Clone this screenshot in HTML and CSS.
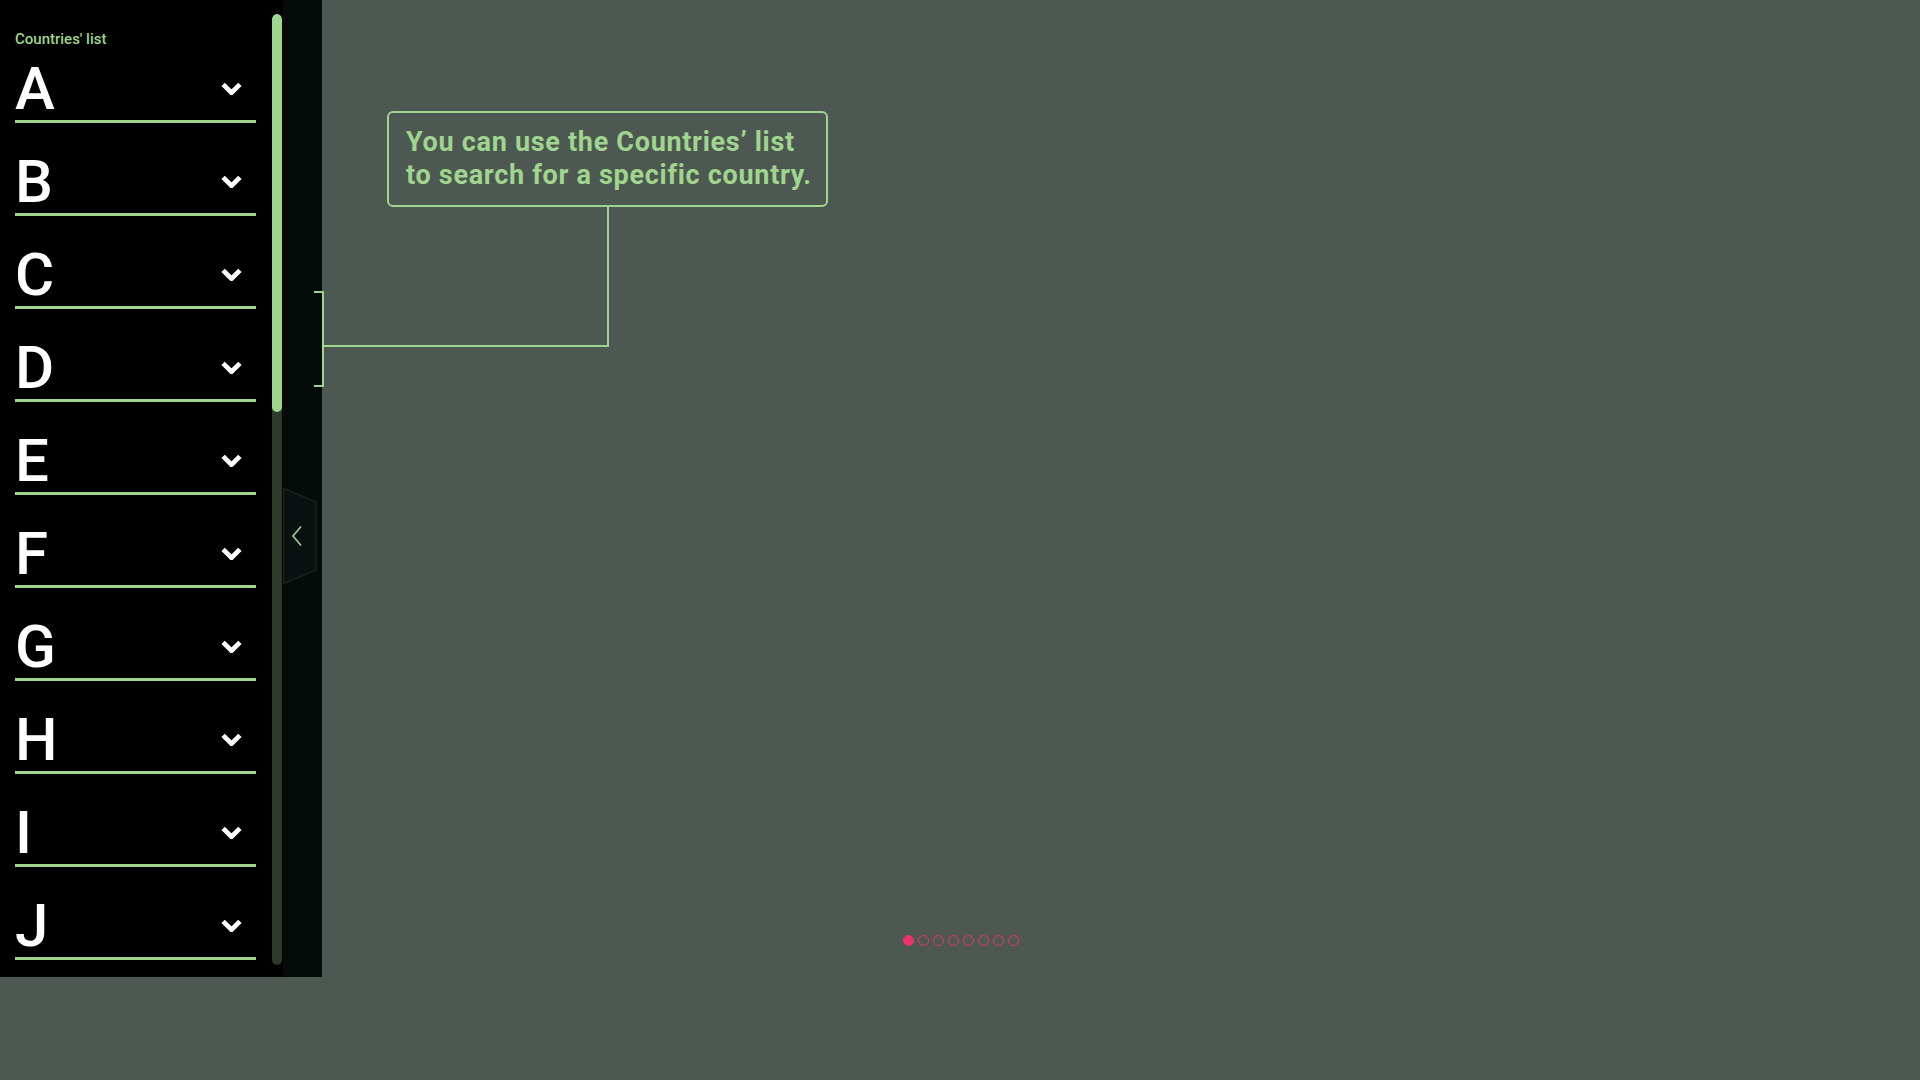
FILE: index.html
```html
<!DOCTYPE html>
<html lang="en">
<head>
<meta charset="utf-8">
<title>Countries' list</title>
<link rel="stylesheet" href="styles.css">
</head>
<body>
<div class="app">
  <aside class="sidebar">
    <div class="panel">
      <div class="list">
        <div class="list-label">Countries' list</div>
        <div class="row"><span class="letter">A</span><svg class="chev" viewBox="0 0 20 12"><polyline points="2,2 10,10 18,2"/></svg></div>
        <div class="row"><span class="letter">B</span><svg class="chev" viewBox="0 0 20 12"><polyline points="2,2 10,10 18,2"/></svg></div>
        <div class="row"><span class="letter">C</span><svg class="chev" viewBox="0 0 20 12"><polyline points="2,2 10,10 18,2"/></svg></div>
        <div class="row"><span class="letter">D</span><svg class="chev" viewBox="0 0 20 12"><polyline points="2,2 10,10 18,2"/></svg></div>
        <div class="row"><span class="letter">E</span><svg class="chev" viewBox="0 0 20 12"><polyline points="2,2 10,10 18,2"/></svg></div>
        <div class="row"><span class="letter">F</span><svg class="chev" viewBox="0 0 20 12"><polyline points="2,2 10,10 18,2"/></svg></div>
        <div class="row"><span class="letter">G</span><svg class="chev" viewBox="0 0 20 12"><polyline points="2,2 10,10 18,2"/></svg></div>
        <div class="row"><span class="letter">H</span><svg class="chev" viewBox="0 0 20 12"><polyline points="2,2 10,10 18,2"/></svg></div>
        <div class="row"><span class="letter">I</span><svg class="chev" viewBox="0 0 20 12"><polyline points="2,2 10,10 18,2"/></svg></div>
        <div class="row"><span class="letter">J</span><svg class="chev" viewBox="0 0 20 12"><polyline points="2,2 10,10 18,2"/></svg></div>
      </div>
      <div class="scrollbar"><div class="thumb"></div></div>
    </div>
    <div class="strip">
      <button class="toggle" aria-label="Collapse list">
        <svg class="toggle-shape" viewBox="0 0 34 96"><polygon points="0.5,0.5 33,14 33,82 0.5,95.5"/></svg>
        <svg class="toggle-chev" viewBox="0 0 12 22"><polyline points="10,1.5 2,11 10,20.5"/></svg>
      </button>
    </div>
  </aside>

  <main class="stage">
    <div class="callout">You can use the Countries’ list<br>to search for a specific country.</div>
    <div class="dots">
      <span class="dot active"></span><span class="dot"></span><span class="dot"></span><span class="dot"></span><span class="dot"></span><span class="dot"></span><span class="dot"></span><span class="dot"></span>
    </div>
  </main>
</div>
<svg class="bracket" width="320" height="98" viewBox="0 0 320 98">
  <polyline points="0,1 9,1 9,95 0,95"/>
  <polyline points="9,55 294,55 294,-84"/>
</svg>
</body>
</html>
```

FILE: styles.css
```css
* { box-sizing: border-box; }

html, body {
  margin: 0;
  padding: 0;
  width: 1920px;
  height: 1080px;
  overflow: hidden;
  background: #4e5852;
  font-family: "Liberation Sans", Arial, sans-serif;
}

.app {
  position: relative;
  display: flex;
  align-items: flex-start;
  width: 1920px;
  height: 1080px;
}

.sidebar {
  display: flex;
  width: 322px;
  height: 977px;
  flex: none;
}

.panel {
  display: flex;
  width: 283px;
  height: 100%;
  background: #000;
}

.list {
  width: 256px;
  padding-left: 15px;
  height: 100%;
  overflow: hidden;
}

.list-label {
  padding-top: 30px;
  font-family: Roboto, "Liberation Sans", sans-serif;
  font-weight: 500;
  font-size: 15px;
  line-height: 18px;
  color: #9fd58c;
}

.row {
  display: flex;
  align-items: center;
  justify-content: space-between;
  padding: 29px 14px 1px 0;
  border-bottom: 3px solid #9fd58c;
}

.list-label + .row {
  padding-top: 11px;
}

.letter {
  font-family: Roboto, "Liberation Sans", sans-serif;
  font-weight: 500;
  font-size: 60px;
  line-height: 60px;
  color: #fff;
}

.chev {
  width: 21px;
  height: 13px;
  margin-bottom: 2px;
  fill: none;
  stroke: #fff;
  stroke-width: 4.5;
  stroke-linejoin: miter;
}

.scrollbar {
  width: 10px;
  margin: 14px 0 12px 16px;
  border-radius: 5px;
  background: #2b3a2b;
  overflow: hidden;
}

.thumb {
  height: 398px;
  border-radius: 5px;
  background: #9fd58c;
}

.strip {
  width: 39px;
  height: 100%;
  background: #050b08;
}

.toggle {
  position: relative;
  display: block;
  margin-top: 488px;
  width: 34px;
  height: 96px;
  padding: 0;
  border: 0;
  background: transparent;
  cursor: pointer;
}

.toggle-shape {
  position: absolute;
  left: 0;
  top: 0;
  width: 34px;
  height: 96px;
  fill: #0b1110;
  stroke: #1e2623;
  stroke-width: 1.2;
}

.toggle-chev {
  position: absolute;
  left: 8px;
  top: 37px;
  width: 12px;
  height: 22px;
  fill: none;
  stroke: #9fd58c;
  stroke-width: 1.6;
}

.stage {
  position: relative;
  flex: 1;
  height: 100%;
}

.callout {
  position: absolute;
  left: 65px;
  top: 111px;
  width: 441px;
  height: 96px;
  padding: 13px 0 0 17px;
  border: 2px solid #9fd58c;
  border-radius: 6px;
  font-family: Roboto, "Liberation Sans", sans-serif;
  font-weight: 700;
  font-size: 27px;
  line-height: 33px;
  letter-spacing: 0.7px;
  white-space: nowrap;
  color: #9fd58c;
}

.bracket {
  position: absolute;
  left: 314px;
  top: 291px;
  overflow: visible;
  fill: none;
  stroke: #9fd58c;
  stroke-width: 2;
}

.dots {
  position: absolute;
  left: 581px;
  top: 935px;
  display: flex;
  gap: 4px;
}

.dot {
  width: 11px;
  height: 11px;
  border-radius: 50%;
  border: 1.5px solid #ee3368;
}

.dot.active {
  background: #ee3368;
}
```
